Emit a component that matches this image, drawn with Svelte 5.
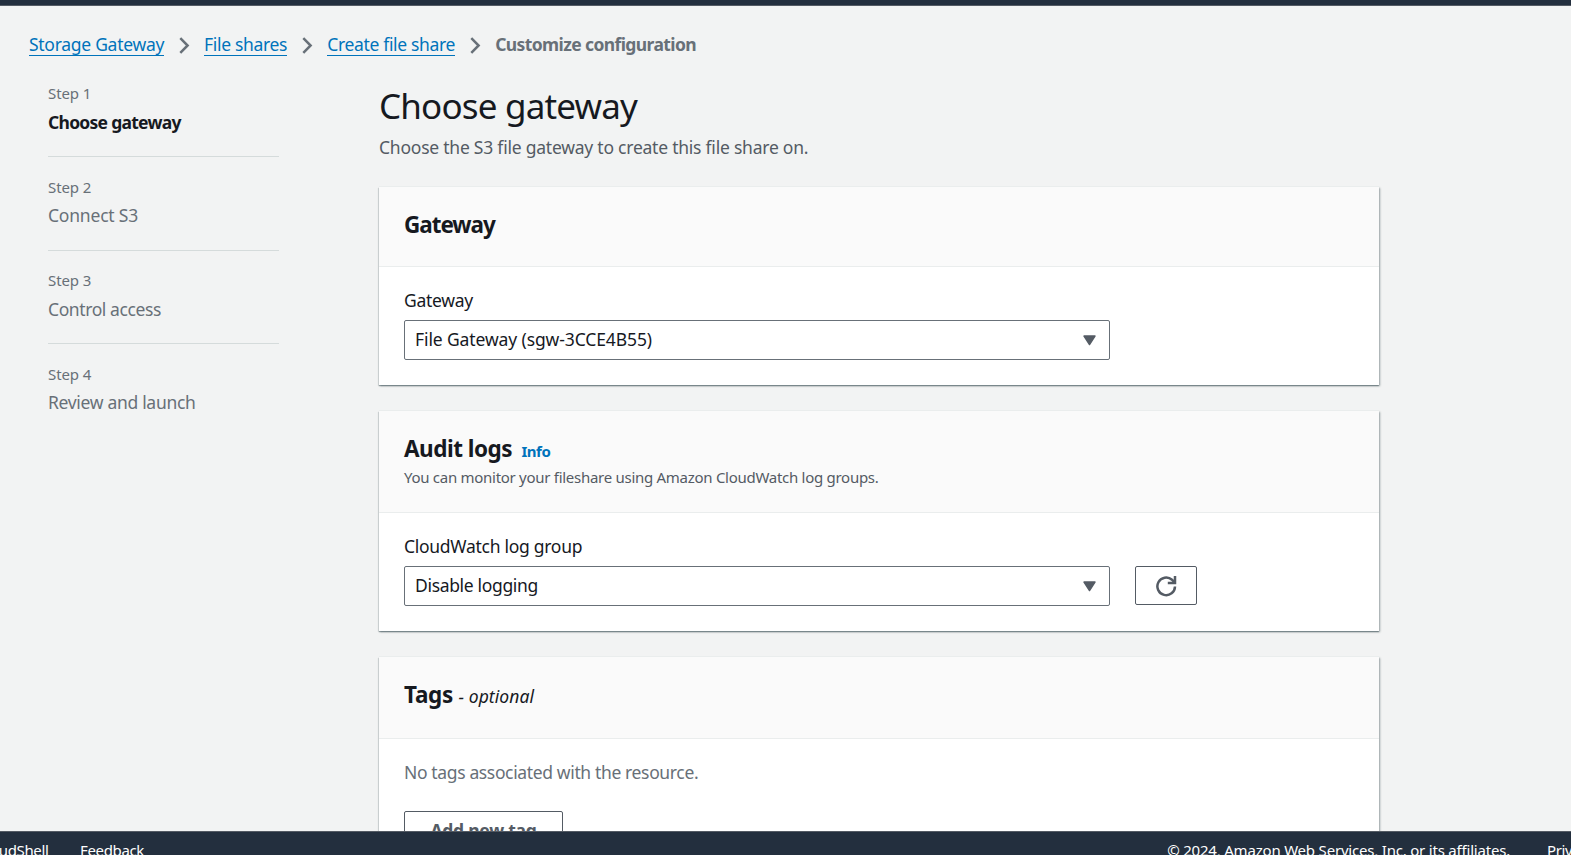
<script>
  const crumbs = [
    { text: 'Storage Gateway', ls: -0.28 },
    { text: 'File shares', ls: -0.33 },
    { text: 'Create file share', ls: -0.33 }
  ];
  const steps = [
    { name: 'Choose gateway', ls: -0.73, active: true },
    { name: 'Connect S3', ls: -0.2 },
    { name: 'Control access', ls: -0.4 },
    { name: 'Review and launch', ls: -0.31 }
  ];
</script>

{#snippet select(text, ls)}
  <div class="select" role="combobox" aria-expanded="false" aria-controls="none" tabindex="0">
    <span style:letter-spacing="{ls}px">{text}</span>
    <svg width="13" height="11" viewBox="0 0 13 11"><path d="M1 1h11L6.5 9.6z" fill="#545b64" stroke="#545b64" stroke-width="1.4" stroke-linejoin="round" /></svg>
  </div>
{/snippet}

<div class="page">
  <div class="topbar"></div>
  <div class="main">
    <nav class="crumbs">
      {#each crumbs as c}
        <a href="#top" style:letter-spacing="{c.ls}px">{c.text}</a>
        <svg class="chev" width="11" height="17" viewBox="0 0 11 17"><path d="M1.3 1.2 8.6 8.5 1.3 15.8" fill="none" stroke="#687078" stroke-width="2.5" /></svg>
      {/each}
      <b>Customize configuration</b>
    </nav>
    <div class="cols">
      <ol class="steps">
        {#each steps as s, i}
          <li>
            <div class="num">Step {i + 1}</div>
            <div class="name" class:active={s.active} style:letter-spacing="{s.ls}px">{s.name}</div>
          </li>
        {/each}
      </ol>
      <div class="content">
        <h1>Choose gateway</h1>
        <p class="desc">Choose the S3 file gateway to create this file share on.</p>

        <section class="card">
          <header class="h-gateway"><h2 class="t-gateway">Gateway</h2></header>
          <div class="body">
            <div class="label">Gateway</div>
            {@render select('File Gateway (sgw-3CCE4B55)', -0.11)}
          </div>
        </section>

        <section class="card">
          <header class="h-audit">
            <h2 class="t-audit">Audit logs <a class="info" href="#info">Info</a></h2>
            <p class="sub">You can monitor your fileshare using Amazon CloudWatch log groups.</p>
          </header>
          <div class="body">
            <div class="label">CloudWatch log group</div>
            <div class="row">
              {@render select('Disable logging', -0.33)}
              <button class="refresh" aria-label="Refresh">
                <svg width="22" height="22" viewBox="0 0 22 22" fill="none" stroke="#545b64" stroke-width="2.5">
                  <path d="M20 11.4a8.8 8.8 0 1 1-3-6.7l2.2 2.4" />
                  <path d="M20 1v7h-7.2" />
                </svg>
              </button>
            </div>
          </div>
        </section>

        <section class="card">
          <header class="h-tags"><h2 class="t-tags">Tags <i>- optional</i></h2></header>
          <div class="body">
            <p class="empty">No tags associated with the resource.</p>
            <button class="add">Add new tag</button>
          </div>
        </section>
      </div>
    </div>
  </div>
  <footer class="bar">
    <span class="shell">CloudShell</span>
    <span class="feedback">Feedback</span>
    <span class="copy">© 2024, Amazon Web Services, Inc. or its affiliates.</span>
    <span class="priv">Privacy</span>
  </footer>
</div>

<style>
  :global(body) { margin: 0; overflow: hidden; }
  .page {
    width: 100%; height: 855px; display: flex; flex-direction: column; overflow: hidden;
    background: #f2f3f3; color: #16191f;
    font-family: "Noto Sans", sans-serif; font-size: 17.5px; line-height: 27.5px;
  }
  .page * { box-sizing: border-box; white-space: nowrap; }
  h1, h2, p, ol { margin: 0; padding: 0; font-weight: 400; }
  ol { list-style: none; }
  .topbar { height: 6px; flex: none; background: #232f3e; border-bottom: 1px solid #545b64; }
  .main { height: 825px; flex: none; overflow: hidden; padding: 24.5px 0 0 29px; }
  .crumbs { display: flex; height: 27.5px; }
  .crumbs a {
    color: #0073bb; text-decoration: none; height: 25.5px;
    border-bottom: 1px solid #0073bb;
  }
  .chev { margin: 6px 14px 0 15px; flex: none; }
  .crumbs b { color: #687078; letter-spacing: -0.6px; }
  .cols { display: flex; padding: 25px 0 0 19px; }
  .steps { width: 231px; flex: none; margin-right: 100px; padding-top: 0.1px; }
  li { border-bottom: 1px solid #d5dbdb; padding-bottom: 19.8px; margin-bottom: 19.6px; }
  li:last-child { border: 0; }
  .num { font-size: 15px; line-height: 20px; color: #687078; letter-spacing: -0.1px; margin-bottom: 5.65px; }
  .name { color: #687078; }
  .name.active { color: #16191f; font-weight: 700; }
  .content { width: 1000px; flex: none; }
  h1 { font-size: 35px; line-height: 44px; letter-spacing: -0.82px; padding-top: 0.5px; }
  .desc { color: #545b64; letter-spacing: -0.23px; margin: 6px 0 26px; }
  .card {
    background: #fff; margin-bottom: 26px;
    box-shadow: 0 -1px 0 #eaeded, 0 1px 1px 0 rgba(0, 28, 36, 0.26), 1px 1px 2px 0 rgba(0, 28, 36, 0.36), -1px 1px 1px 0 rgba(0, 28, 36, 0.1);
  }
  header { background: #fafafa; border-bottom: 1px solid #eaeded; padding: 24px 25px 0; }
  .h-gateway { height: 80px; }
  .h-audit { height: 102px; }
  .h-tags { height: 82px; }
  h2 { font-size: 22.5px; line-height: 27.5px; font-weight: 700; letter-spacing: -0.5px; }
  .t-gateway { letter-spacing: -1.05px; }
  .t-tags { letter-spacing: -0.3px; }
  .info { font-size: 15px; letter-spacing: -0.45px; color: #0073bb; text-decoration: none; margin-left: 4px; }
  i { font-size: 17.5px; font-weight: 400; letter-spacing: 0.08px; }
  .sub { font-size: 15px; line-height: 20px; color: #545b64; letter-spacing: -0.28px; margin-top: 1px; }
  .body { padding: 19.5px 25px 25px; }
  .label { letter-spacing: -0.28px; margin-bottom: 6px; }
  .row { display: flex; gap: 25px; }
  .select {
    width: 706px; height: 40px; padding: 0 13.5px 0 10px;
    border: 1px solid #687078; border-radius: 2px; background: #fff;
    display: flex; align-items: center; justify-content: space-between;
  }
  .select span { margin-top: -1px; }
  button {
    background: #fff; border: 1px solid #545b64; border-radius: 2px; padding: 0;
    font: 700 17.5px/27.5px "Noto Sans", sans-serif; color: #545b64; letter-spacing: -0.26px;
  }
  .refresh { width: 62px; height: 39px; display: flex; align-items: center; justify-content: center; }
  .empty { color: #687078; letter-spacing: -0.36px; margin-bottom: 25px; }
  .add { width: 159px; height: 40px; display: block; }
  .bar {
    height: 24px; flex: none; overflow: hidden; display: flex; background: #232f3e; border-top: 1px solid #545b64;
    color: #fff; font-size: 15px; line-height: 20px; padding-top: 8px;
  }
  .bar span { flex: none; letter-spacing: -0.35px; }
  .shell { width: 48.5px; display: flex; justify-content: flex-end; }
  .feedback { margin-left: 31.5px; }
  .bar .copy { margin-left: auto; letter-spacing: -0.2px; }
  .priv { width: 24px; margin-left: 37px; }
</style>
